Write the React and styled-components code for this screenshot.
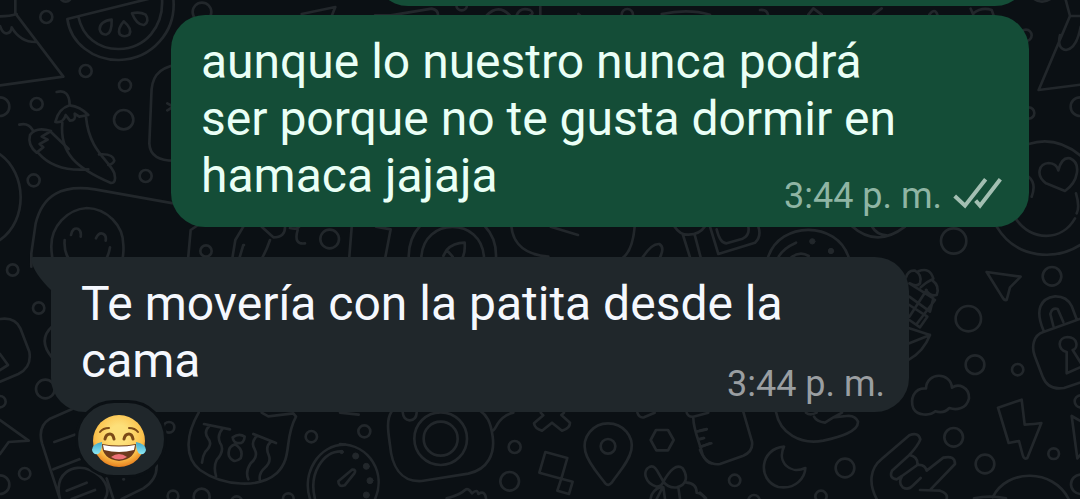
import React from 'react'
import styled, { createGlobalStyle } from 'styled-components'

const GlobalStyle = createGlobalStyle`
body{
margin:0;
background:#0b1014;
}
`
const Screen = styled.main`
position:relative;
box-sizing:border-box;
height:100vh;
padding:0 51px 21px;
display:flex;
flex-direction:column;
justify-content:flex-end;
overflow:hidden;
background:#0b1014;
font-family:Roboto, "Liberation Sans", sans-serif;
`
const Wallpaper = styled.svg`
position:absolute;
top:0;
left:0;
width:100%;
height:100%;
fill:none;
stroke:#22272b;
stroke-width:8;
stroke-linecap:round;
stroke-linejoin:round;
`
const Row = styled.div`
position:relative;
flex:none;
display:flex;
flex-direction:column;
align-items:${props => (props.$mine ? 'flex-end' : 'flex-start')};
margin-top:${props => props.$gap || 0}px;
`
const Bubble = styled.article`
position:relative;
box-sizing:border-box;
width:calc(100% - 120px);
display:flow-root;
padding:18px 114px ${props => (props.$mine ? 10 : 7)}px 30px;
border-radius:${props => (props.$mine ? '34px' : '0 34px 34px 34px')};
background:${props => (props.$mine ? '#144d37' : '#20272b')};
color:${props => (props.$mine ? '#eafff6' : '#f5f8fe')};
font-size:48px;
line-height:57px;
`
const PreviousBubble = styled.div`
width:67%;
height:90px;
border-radius:34px;
background:#144d37;
`
const Tail = styled.svg`
position:absolute;
top:0;
left:-20px;
width:21px;
height:36px;
fill:#20272b;
`
const Text = styled.span``
// floats beside the last line and reaches into the bubble's right padding
const Meta = styled.div`
float:right;
display:flex;
align-items:center;
gap:11px;
margin:${props => (props.$mine ? 28 : 31)}px -90px 0 0;
font-size:36px;
line-height:42px;
color:${props => (props.$mine ? '#8fb5a4' : '#9a9ea1')};
`
const Ticks = styled.svg`
width:50px;
height:32px;
margin:-6px 2px 0 0;
fill:none;
stroke:#a3bfb2;
stroke-width:12;
`
const Reaction = styled.button`
position:relative;
box-sizing:border-box;
width:92px;
height:78px;
margin:-12px 0 0 24px;
padding:0;
display:flex;
align-items:center;
justify-content:center;
border:3px solid #0b1014;
border-radius:39px;
background:#20272b;
`
const Emoji = styled.svg`
width:56px;
height:56px;
margin:4px 4px 0 0;
`

const Dots = ({ at }) => at.map(([x, y, r]) => <circle key={`${x}-${y}`} cx={x} cy={y} r={r} />)

const Patch = ({ x, y, children }) => (
  <g transform={`translate(${x} ${y}) scale(0.33333)`}>{children}</g>
)

const Doodles = () => (
  <Wallpaper viewBox="0 0 1080 499" preserveAspectRatio="xMinYMin slice" aria-hidden="true">
    <Patch x={0} y={0}>
      <Dots at={[[139, 51, 18], [257, 213, 18], [375, 256, 18], [110, 312, 18], [371, 359, 29], [437, 528, 18], [101, 541, 18], [0, 320, 28], [606, 36, 28], [197, -12, 17], [989, 717, 28], [618, 753, 17]]} />
      {/* party hat */}
      <path d="M46 -5V40L190 230L0 256M0 49Q30 49 50 42M0 78Q8 102 20 100Q34 98 35 82Q62 128 110 126" />
      {/* watermelon */}
      <path d="M448 -4L202 57C212 130 280 181 357 180C455 178 530 95 520 -5M235 50C248 110 295 148 357 147C436 145 492 80 486 -5" />
      <path d="M335 59Q299 64 299 88Q303 106 320 103Q336 98 335 59ZM371 64Q352 86 359 103Q372 114 388 104Q398 87 371 64ZM396 40Q419 34 437 44Q450 63 432 75Q410 76 396 40Z" />
      {/* chilli peppers */}
      <path d="M170 276C196 268 208 285 209 314M166 366Q175 326 209 316Q240 319 265 345L238 350L224 341Q229 362 210 362L197 345Q190 370 166 366M187 368C178 460 230 505 333 549Q350 549 343 520C328 480 268 455 258 351" />
      <path d="M58 374Q85 367 98 390M110 458Q82 435 90 405Q108 379 153 393L125 410L143 419L119 432L130 442L110 458M153 396L206 447M116 460Q165 516 265 508M297 463Q340 460 343 482Q340 492 325 495" />
      <path d="M530 194C470 205 454 235 454 285L448 430Q450 485 530 482M502 310L520 320L502 331M905 42L1006 21L995 48" />
      <path d="M0 463C80 520 85 660 0 720" />
      {/* smiling face on a chat bubble */}
      <path d="M520 610L285 568C185 553 128 585 107 670L94 760L94 800M261 624C200 628 153 680 154 740Q154 760 160 790M261 624C320 626 370 675 370 735Q372 760 365 790M213 705Q218 682 233 686Q245 692 242 710M288 715Q296 696 309 701Q320 706 317 722M194 720Q188 790 260 815Q320 805 330 742" />
      {/* flowers and stems */}
      <path d="M555 880L572 690L590 678M680 878L706 720L730 680M690 868L730 735M785 680L820 712Q856 712 855 680M706 868Q780 810 810 720M730 735h2M870 684Q895 690 900 676M893 690Q880 735 915 730M1055 682L1040 870" />
    </Patch>
    <Patch x={0} y={240}>
      <Dots at={[[38, 90, 17], [116, 204, 17], [136, 447, 28], [0, 485, 17], [74, 701, 17], [0, 734, 28], [507, 562, 16], [934, 590, 17], [519, 768, 16], [605, 770, 24], [710, 785, 16], [865, 776, 16]]} />
      <path d="M0 237Q45 230 61 265L88 335Q96 382 55 402L0 425M0 342L24 375L0 390M158 258Q110 300 158 355" />
      <path d="M0 540L86 602L26 606L0 642" />
      {/* surf board */}
      <path d="M215 508L150 536Q112 560 126 610L180 777M163 606L224 584M160 688L240 657M180 777C160 700 220 668 270 690C310 708 335 745 315 777M200 752L260 728M215 777L285 750M320 715L340 777M470 675Q472 720 430 745L365 777M370 718h2" />
      {/* striped pot */}
      <path d="M596 518C560 580 550 650 600 690C670 740 780 745 830 700C880 650 850 600 888 530L880 520L805 529L785 518M612 552L690 568M760 582L828 609M628 558Q610 575 624 595Q640 612 616 635Q608 648 606 668M668 566Q650 585 660 608Q676 630 650 660Q640 680 648 708M768 590Q752 610 764 628Q776 650 752 670Q735 695 745 718M812 606Q795 620 806 645Q815 665 794 684Q775 700 780 724M698 592Q718 578 734 590Q733 612 712 609Q700 607 698 592ZM705 613Q681 622 687 648Q700 674 722 655Q732 628 705 613Z" />
      {/* stopwatch */}
      <path d="M930 777C905 700 955 614 1035 614M945 777C925 700 970 632 1026 634M1015 724L1056 689Q1070 688 1063 700L1034 736Q1015 742 1015 724Z" />
    </Patch>
    <Patch x={340} y={200}>
      <path d="M108 80L152 88L136 172M206 172Q206 115 240 78M244 172C250 50 425 50 432 172M434 78Q470 115 468 172M320 150Q340 128 374 128Q376 155 368 172M310 168L320 150L338 170M514 78C520 145 570 165 625 170M632 80L714 105M884 80Q878 150 850 172M908 172Q935 130 958 132Q975 142 960 172M1004 80Q1020 105 1046 104Q1080 102 1094 80M1028 102L1050 172M1064 104L1082 172" />
    </Patch>
    <Patch x={340} y={390}>
      <Dots at={[[73, 124, 18], [524, 171, 18], [509, 274, 28], [804, 169, 22], [302, 146, 79], [302, 146, 51]]} />
      <g fill="#22272b" strokeWidth="3">
        <Dots at={[[47, 198, 9], [79, 229, 9], [90, 272, 9], [79, 315, 9], [5, 186, 5]]} />
      </g>
      <path d="M0 162C90 165 140 250 104 330M0 68L56 74" />
      {/* camera */}
      <path d="M154 66C138 90 145 130 150 165C155 225 180 277 245 273L385 251C445 238 465 190 458 140C452 95 440 75 420 62M188 66Q190 90 209 91Q229 90 230 68M458 122Q463 120 472 103Q490 75 520 68" />
      <path d="M602 68L610 76L582 100Q584 115 606 122L636 98L666 122Q690 115 690 98L664 75L672 68" />
      <path d="M616 186L682 204L664 266L598 248ZM664 266L698 275L687 312L652 302Z" />
      {/* map pin */}
      <path d="M804 100C760 100 725 140 736 185C744 220 775 252 796 280Q805 290 815 278C838 245 867 215 874 180C882 140 850 100 804 100Z" />
      <path d="M948 120L984 120L1001 150L984 181L949 181L932 150ZM892 68Q898 85 912 82L944 68" />
      {/* bow */}
      <path d="M970 275C950 240 945 225 930 230C905 242 915 280 950 290Q965 290 970 275C990 240 1010 220 1028 235C1045 260 1040 285 1010 292Q985 295 970 275M965 290Q935 300 932 325M968 292L950 327M970 292L975 327M1015 292L1020 327M1040 278Q1070 280 1070 308Q1085 310 1095 325" />
      <path d="M320 325Q360 315 375 300Q385 292 396 310Q412 295 415 312Q435 300 438 325" />
      {/* mitten */}
      <path d="M1040 68Q1045 82 1060 80L1105 68M1060 85C1060 120 1080 160 1088 195Q1100 220 1115 220M1070 125L1100 118M1075 148L1090 144M1084 170L1110 160" />
    </Patch>
    <Patch x={700} y={200}>
      <Dots at={[[761, 123, 38], [1056, 229, 28], [805, 356, 38], [825, 494, 28], [953, 509, 17], [761, 712, 28], [855, 792, 28], [435, 804, 28], [1061, 761, 16], [104, 841, 17], [363, 889, 17], [162, 902, 17], [1142, 604, 18], [1142, 853, 29]]} />
      <path d="M860 216L962 230L930 262L920 300Q912 302 906 290ZM30 80L55 162L165 128Q185 110 175 80M50 88Q60 130 80 130L128 116Q150 105 145 80" />
      <path d="M204 172C240 62 410 62 446 172M236 170Q250 145 288 128M274 172Q300 152 326 168M455 78Q530 145 615 80M515 78Q530 105 560 106" />
      <g fill="#22272b" strokeWidth="3"><Dots at={[[337, 124, 8], [393, 153, 8]]} /></g>
      <path d="M890 80C950 180 1070 182 1145 132M946 55C995 125 1085 125 1125 55" />
      {/* grapes */}
      <path d="M618 232Q625 209 645 212Q668 225 660 250Q650 262 630 250M655 214Q690 200 700 236Q680 245 662 262M698 242Q720 258 710 285Q690 290 678 270M628 250L700 295L690 335L628 290M628 350L680 270M650 372L705 300M628 315L682 350L660 382L628 360M628 385L690 405Q670 455 628 478M628 430L690 405" />
      {/* padlock */}
      <path d="M1145 355L1030 396C1000 405 994 440 1004 467L1028 530Q1045 572 1092 564L1145 546M1030 390C1005 330 1020 295 1065 289Q1100 288 1115 318L1130 358M1060 378L1051 342Q1055 322 1073 327L1090 366M1100 456C1070 448 1074 412 1102 411C1135 412 1135 445 1118 450L1142 488M1100 456L1100 520L1145 500" />
      {/* cloud */}
      <path d="M748 624C765 630 800 630 807 595C808 560 775 550 756 563C752 515 680 515 678 565C640 563 630 600 640 625C652 648 690 648 706 634Q732 642 748 624Z" />
      {/* lightning */}
      <path d="M894 623L965 599L974 674Q1005 672 1024 669L982 774Q972 780 968 765L957 723L926 729ZM1145 665L1115 648L1132 775L1145 760" />
      {/* moon */}
      <path d="M252 740C180 745 170 840 235 861C290 870 315 830 316 804C270 825 230 785 252 740Z" />
      <path d="M228 636C240 700 300 735 370 722C420 710 475 695 474 665Q465 645 440 648L400 652L426 638M400 652L375 668Q350 665 342 650M318 638Q330 648 350 638M130 636L156 725Q160 755 130 767L60 792Q20 798 0 750M0 692L20 687M0 718L12 714M0 740L34 730" />
      {/* hand sign */}
      <path d="M530 897C505 850 510 805 545 777L628 706Q655 695 661 718Q655 735 628 765M628 765L576 812Q566 835 590 838L606 828M628 765Q655 770 652 795L606 828Q594 850 608 862Q625 872 638 857L662 834M652 795Q675 792 680 812L730 773Q765 765 765 792L692 868M660 870L720 872Q745 880 740 897" />
      <path d="M878 892C920 805 1060 805 1106 897M822 895Q870 885 918 895M0 878L18 895" />
    </Patch>
    <Patch x={760} y={0}>
      <Dots at={[[798, 106, 17], [806, 339, 17], [960, 320, 28]]} />
      <path d="M916 -5L930 48L836 270L962 254M930 48H965M900 105Q890 145 918 150Q950 145 962 80M820 -5Q845 15 874 -5" />
      <path d="M806 432Q890 405 965 470M915 573L858 550C825 525 838 490 866 489Q890 490 895 511Q905 470 930 475C965 490 955 545 915 573ZM806 530Q830 550 815 590M948 580Q960 620 950 640" />
      <path d="M0 30Q20 28 24 44M145 44L160 25L185 44M340 44L365 25M508 44Q525 22 532 44M632 26L640 44M640 40Q665 20 695 30L700 44" />
    </Patch>
    <Patch x={360} y={0}>
      <Dots at={[[305, 15, 16], [802, 44, 17]]} />
      <path d="M45 46L92 46L215 26Q235 30 234 46M380 46Q415 10 450 46M470 46Q480 20 510 30Q525 40 510 46M541 20V46M655 42L660 46M905 42Q985 25 1050 44" />
    </Patch>
  </Wallpaper>
)

const JoyEmoji = () => (
  <Emoji viewBox="0 0 56 56" role="img" aria-label="Cara llorando de risa">
    <defs>
      <radialGradient id="skin" cx="50%" cy="38%" r="62%">
        <stop offset="0.3" stopColor="#fde07a" />
        <stop offset="0.75" stopColor="#fbc04a" />
        <stop offset="1" stopColor="#e8801f" />
      </radialGradient>
      <linearGradient id="tear" x1="0" y1="0" x2="0" y2="1">
        <stop offset="0" stopColor="#3fa9cb" />
        <stop offset="1" stopColor="#8de8f3" />
      </linearGradient>
    </defs>
    <circle cx="28" cy="28" r="26" fill="url(#skin)" />
    <g fill="none" stroke="#7b4a17" strokeLinecap="round">
      <path d="M9 19Q12 15 18 15M38 15Q44 15 47 19" strokeWidth="2" />
      <path d="M14 26Q15 21 19 21Q22 21 23 26M33 26Q34 21 38 21Q41 21 42 26" strokeWidth="3" />
    </g>
    <path d="M11 31Q28 34 45 31Q45 46 28 48Q11 46 11 31Z" fill="#6d3b1d" />
    <path d="M12 32Q28 35 44 32L43 37Q28 41 13 37Z" fill="#fff" />
    <path d="M20 44Q28 38 36 44Q28 49 20 44Z" fill="#ed7277" />
    <path d="M11 29Q1 31 1 37Q2 42 7 41Q11 39 11 29ZM45 29Q55 31 55 37Q54 42 49 41Q45 39 45 29Z" fill="url(#tear)" />
  </Emoji>
)

const App = () => {
  return (
    <>
      <GlobalStyle />
      <Screen>
        <Doodles />
        <Row $mine>
          <PreviousBubble />
        </Row>
        <Row $mine $gap={9}>
          <Bubble $mine>
            <Text>aunque lo nuestro nunca podrá ser porque no te gusta dormir en hamaca jajaja</Text>
            <Meta $mine>
              <time dateTime="15:44">3:44 p. m.</time>
              <Ticks viewBox="580 530 150 96" role="img" aria-label="Entregado">
                <path d="M585 587L616 616L678 537M648 601L661 616L722 537" />
              </Ticks>
            </Meta>
          </Bubble>
        </Row>
        <Row $gap={30}>
          <Bubble>
            <Tail viewBox="0 0 21 36">
              <path d="M21 0H2Q0 0 0 2Q2 16 21 34Z" />
            </Tail>
            <Text>Te movería con la patita desde la cama</Text>
            <Meta>
              <time dateTime="15:44">3:44 p. m.</time>
            </Meta>
          </Bubble>
          <Reaction type="button">
            <JoyEmoji />
          </Reaction>
        </Row>
      </Screen>
    </>
  )
}

export default App
